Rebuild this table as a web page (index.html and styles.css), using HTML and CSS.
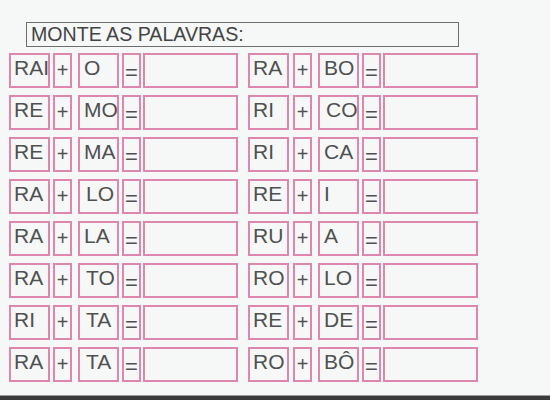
FILE: index.html
```html
<!DOCTYPE html>
<html lang="pt">
<head>
<meta charset="utf-8">
<title>Monte as palavras</title>
<link rel="stylesheet" href="styles.css">
</head>
<body>
<div class="sheet">
  <div class="title">MONTE AS PALAVRAS:</div>
  <div class="rows">
    <div class="row">
      <div class="group">
        <div class="cell w1">RAI</div><div class="cell op">+</div><div class="cell w2">O</div><div class="cell eq">=</div><div class="cell ans"></div>
      </div>
      <div class="group">
        <div class="cell w1">RA</div><div class="cell op">+</div><div class="cell w2">BO</div><div class="cell eq">=</div><div class="cell ans"></div>
      </div>
    </div>
    <div class="row">
      <div class="group">
        <div class="cell w1">RE</div><div class="cell op">+</div><div class="cell w2">MO</div><div class="cell eq">=</div><div class="cell ans"></div>
      </div>
      <div class="group">
        <div class="cell w1">RI</div><div class="cell op">+</div><div class="cell w2 mid">CO</div><div class="cell eq">=</div><div class="cell ans"></div>
      </div>
    </div>
    <div class="row">
      <div class="group">
        <div class="cell w1">RE</div><div class="cell op">+</div><div class="cell w2">MA</div><div class="cell eq">=</div><div class="cell ans"></div>
      </div>
      <div class="group">
        <div class="cell w1">RI</div><div class="cell op">+</div><div class="cell w2">CA</div><div class="cell eq">=</div><div class="cell ans"></div>
      </div>
    </div>
    <div class="row">
      <div class="group">
        <div class="cell w1">RA</div><div class="cell op">+</div><div class="cell w2 mid">LO</div><div class="cell eq">=</div><div class="cell ans"></div>
      </div>
      <div class="group">
        <div class="cell w1">RE</div><div class="cell op">+</div><div class="cell w2">I</div><div class="cell eq">=</div><div class="cell ans"></div>
      </div>
    </div>
    <div class="row">
      <div class="group">
        <div class="cell w1">RA</div><div class="cell op">+</div><div class="cell w2">LA</div><div class="cell eq">=</div><div class="cell ans"></div>
      </div>
      <div class="group">
        <div class="cell w1">RU</div><div class="cell op">+</div><div class="cell w2">A</div><div class="cell eq">=</div><div class="cell ans"></div>
      </div>
    </div>
    <div class="row">
      <div class="group">
        <div class="cell w1">RA</div><div class="cell op">+</div><div class="cell w2 mid">TO</div><div class="cell eq">=</div><div class="cell ans"></div>
      </div>
      <div class="group">
        <div class="cell w1">RO</div><div class="cell op">+</div><div class="cell w2">LO</div><div class="cell eq">=</div><div class="cell ans"></div>
      </div>
    </div>
    <div class="row">
      <div class="group">
        <div class="cell w1">RI</div><div class="cell op">+</div><div class="cell w2 mid">TA</div><div class="cell eq">=</div><div class="cell ans"></div>
      </div>
      <div class="group">
        <div class="cell w1">RE</div><div class="cell op">+</div><div class="cell w2">DE</div><div class="cell eq">=</div><div class="cell ans"></div>
      </div>
    </div>
    <div class="row">
      <div class="group">
        <div class="cell w1">RA</div><div class="cell op">+</div><div class="cell w2 mid">TA</div><div class="cell eq">=</div><div class="cell ans"></div>
      </div>
      <div class="group">
        <div class="cell w1">RO</div><div class="cell op">+</div><div class="cell w2">BÔ</div><div class="cell eq">=</div><div class="cell ans"></div>
      </div>
    </div>
  </div>
  <div class="edge"></div>
</div>
</body>
</html>
```
FILE: styles.css
```css
html, body {
  margin: 0;
  padding: 0;
  background: #f6f8f7;
}

.sheet {
  width: 550px;
  height: 400px;
  display: flex;
  flex-direction: column;
  font-family: "Liberation Sans", Arial, sans-serif;
  color: #505050;
  overflow: hidden;
}

.title {
  box-sizing: border-box;
  margin: 22px 0 0 26px;
  width: 433px;
  height: 25px;
  border: 1px solid #6e6e6e;
  font-size: 19.6px;
  line-height: 23px;
  padding-left: 4px;
  color: #444;
}

.rows {
  margin-top: 6px;
  display: flex;
  flex-direction: column;
  gap: 7px;
}

.row {
  display: flex;
  padding-left: 9px;
  gap: 10px;
}

.group {
  display: flex;
}

.cell {
  box-sizing: border-box;
  height: 35px;
  border: 2px solid #dd86ae;
  font-size: 21px;
  line-height: 24px;
  padding: 1px 0 0 3px;
  white-space: nowrap;
}

.w1 { width: 41px; }
.op {
  width: 19px;
  margin-left: 3px;
  padding: 3px 0 0;
  text-align: center;
  font-size: 20px;
}
.w2 { width: 41px; margin-left: 6px; padding-left: 4px; }
.w2.mid { padding-left: 6px; }
.eq {
  width: 19px;
  margin-left: 3px;
  padding: 6px 0 0;
  text-align: center;
  font-size: 22px;
}
.ans { width: 95px; margin-left: 2px; }

.group + .group .op { margin-left: 4px; }

.edge {
  margin-top: auto;
  height: 4px;
  background: #3a3a3a;
  border-top: 1px solid #9a9a9a;
}
```
